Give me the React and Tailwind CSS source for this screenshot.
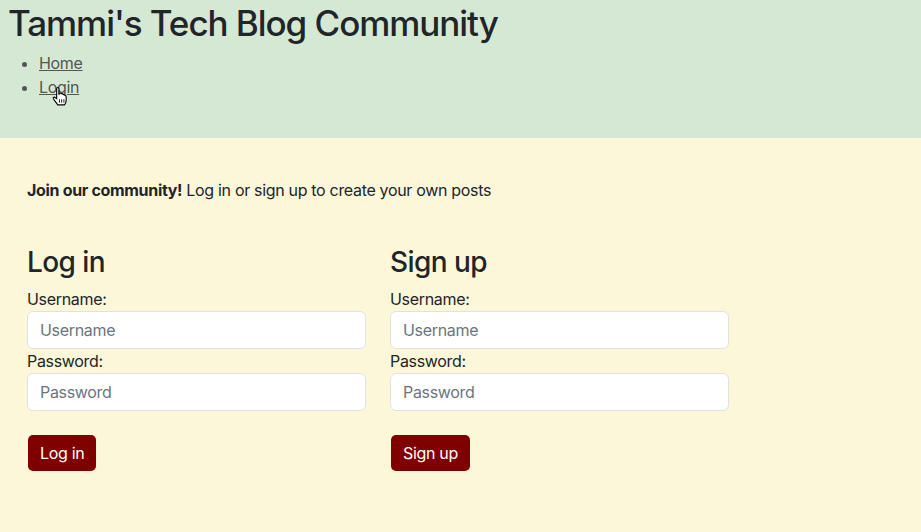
import React from "react";

function Field({ label, placeholder, type = "text" }) {
  return (
    <div className="flex flex-col">
      <label className="text-[16px] leading-[24px] tracking-[-0.02em] text-[#212529]">{label}</label>
      <input
        type={type}
        placeholder={placeholder}
        className="h-[38px] w-full rounded-[6px] border border-[#dee2e6] bg-white px-[12px] text-[16px] tracking-[-0.02em] text-[#212529] placeholder:text-[#6c757d] outline-none"
      />
    </div>
  );
}

function FormCol({ title, button }) {
  return (
    <div className="w-[339px] flex flex-col">
      <h3 className="text-[28px] leading-[34px] font-medium tracking-[-0.02em] text-[#212529] mb-[8px]">{title}</h3>
      <Field label="Username:" placeholder="Username" />
      <Field label="Password:" placeholder="Password" type="password" />
      <div className="mt-[24px] pl-[1px]">
        <button className="h-[36px] rounded-[5px] bg-[#800000] px-[12px] text-[16px] tracking-[-0.02em] text-white">
          {button}
        </button>
      </div>
    </div>
  );
}

export default function App() {
  return (
    <div className="min-h-[532px] bg-[#fdf7d9] font-['Inter',sans-serif] text-[#212529]">
      <header className="h-[138px] bg-[#d5e8d3] pl-[8px] pt-[1px]">
        <h1 className="text-[35px] leading-[44px] font-medium tracking-[-0.03em] text-[#212529] mb-[6px]">Tammi's Tech Blog Community</h1>
        <ul className="list-disc pl-[31px] text-[16px] leading-[24px] tracking-[-0.02em] text-[#555]">
          <li><a href="#" className="underline text-[#555]">Home</a></li>
          <li className="relative">
            <a href="#" className="underline text-[#555]">Login</a>
            <svg className="absolute left-[13px] top-[12px]" width="16" height="19" viewBox="0 0 14 17">
              <path d="M4 1.5 Q4 0.5 5 0.5 Q6 0.5 6 1.5 V7 L6.5 5.5 Q7.5 5 8 6 L8.5 6 Q9.5 5.8 10 6.8 Q11 6.5 11.5 7.5 Q12.5 7.5 12.5 9 V12 Q12.5 14 11 16 H5 Q4 14.5 2 12 L1 10 Q0.8 9 2 9 L4 10.5 Z" fill="white" stroke="black" strokeWidth="1" />
              <path d="M6.5 11 V14 M8.5 11 V14 M10.5 11 V14" stroke="black" strokeWidth="0.8" />
            </svg>
          </li>
        </ul>
      </header>
      <main className="px-[27px] pt-[40px]">
        <p className="text-[16px] leading-[24px] tracking-[-0.02em]">
          <b className="font-bold">Join our community!</b> Log in or sign up to create your own posts
        </p>
        <div className="mt-[43px] flex gap-[24px]">
          <FormCol title="Log in" button="Log in" />
          <FormCol title="Sign up" button="Sign up" />
        </div>
      </main>
    </div>
  );
}
